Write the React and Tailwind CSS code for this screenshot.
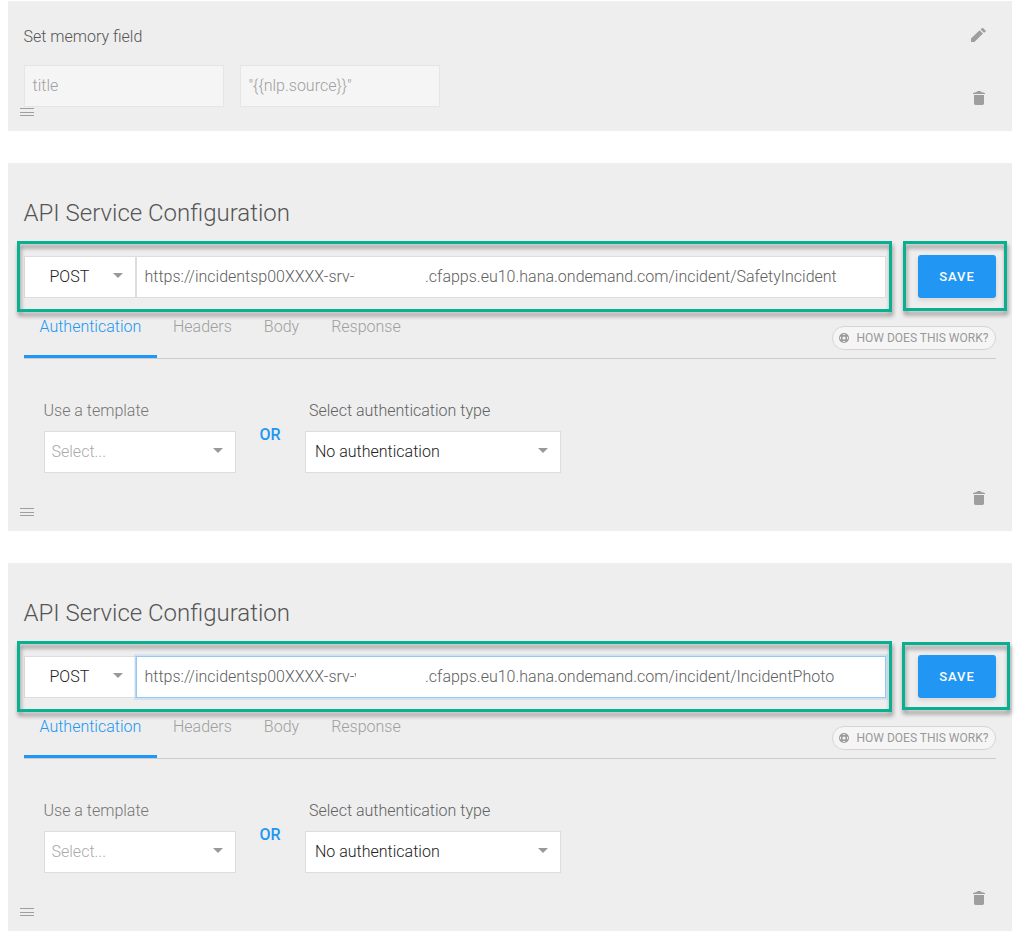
import React from "react";

function Caret({ className = "" }) {
  return (
    <svg className={`block h-[5px] w-[10px] shrink-0 ${className}`} viewBox="0 0 10 5" fill="#999">
      <path d="M0 0h10L5 5z" />
    </svg>
  );
}

function Trash() {
  return (
    <svg className="block h-[14px] w-3" viewBox="0 0 12 14" fill="#9e9e9e">
      <path d="M3.600 1L4.600 0h2.800l1 1L12 2v1H0V2zM1 4h10v8.600c0 .8-.6 1.400-1.400 1.400H2.400C1.600 14 1 13.400 1 12.600z" />
    </svg>
  );
}

function Pencil() {
  return (
    <svg className="block h-[14px] w-[15px]" viewBox="0 0 15 14" fill="#9e9e9e">
      <path d="M0 10.600L8.600 2.300l3.400 3.300L3.400 14H0zM9.600 1.400L10.800.3c.4-.4 1-.4 1.400 0l2.300 2.200c.4.4.4.9 0 1.300L13 4.700z" />
    </svg>
  );
}

function Handle() {
  return (
    <svg className="block h-2 w-[14px]" viewBox="0 0 14 8" fill="#9e9e9e">
      <path d="M0 0h14v1H0zM0 4h14v1H0zM0 7h14v1H0z" />
    </svg>
  );
}

function Lifebuoy() {
  return (
    <svg className="block h-[10px] w-[10px]" viewBox="0 0 10 10">
      <circle cx="5" cy="5" r="5" fill="#999" />
      <circle cx="5" cy="5" r="1.600" fill="#f5f5f5" />
      <path
        d="M3.700 1.700Q5 1.200 6.300 1.700M3.700 8.300Q5 8.800 6.300 8.300M1.700 3.700Q1.200 5 1.700 6.300M8.300 3.700Q8.800 5 8.300 6.300"
        fill="none"
        stroke="#f5f5f5"
        strokeWidth="0.900"
      />
    </svg>
  );
}

function MemoryCard() {
  return (
    <section className="flex h-[130px] justify-between bg-[#eee] pl-4 pr-[26px]">
      <div>
        <h2 className="-ml-[0.5px] mt-6 text-base leading-6 text-[#555]">Set memory field</h2>
        <div className="mt-4 flex gap-4">
          <div className="h-[42px] w-[200px] border border-[#e5e5e5] bg-[#f5f5f5] px-[7.5px] leading-[40px] text-[#a0a0a0]">title</div>
          <div className="h-[42px] w-[200px] border border-[#e5e5e5] bg-[#f5f5f5] px-[7.5px] leading-[40px] text-[#a0a0a0]">{'"{{nlp.source}}"'}</div>
        </div>
        <div className="-ml-1 mt-px"><Handle /></div>
      </div>
      <div className="flex flex-col items-center pt-[27px]">
        <Pencil />
        <div className="mt-[49px]"><Trash /></div>
      </div>
    </section>
  );
}

const tabs = ["Headers", "Body", "Response"];

function ServiceCard({ url, clip, focused, saveFrame }) {
  return (
    <section className="relative h-[368px] bg-[#eee] px-4">
      <h1 className="-ml-[0.5px] pt-[34px] text-2xl leading-8 text-[#555]">API Service Configuration</h1>
      <div className="mt-[26px] flex h-[43px] items-start">
        <div className="mt-[1px] flex h-[42px] w-[112px] items-center border border-[#ddd] bg-white pl-[24.5px] text-[#212121]">
          <span className="w-[63.5px] leading-[38px]">POST</span>
          <Caret className="-mt-[3px]" />
        </div>
        <div
          className={`mt-[1px] flex h-[42px] w-[750px] border bg-white pl-[7.5px] leading-[39px] text-[#606060] ${
            focused ? "border-[#90caf9] shadow-[0_0_0_2px_rgba(33,150,243,0.13)]" : "border-[#ddd]"
          }`}
        >
          <div className="w-[280.500px] shrink-0">
            <div className={`overflow-hidden whitespace-nowrap ${clip}`}>https://incidentsp00XXXX-srv-v</div>
          </div>
          <span className="whitespace-nowrap">{url}</span>
        </div>
        <button className="ml-auto h-[43px] w-[78px] rounded-[3px] bg-[#2196f3] text-[13px] font-medium tracking-[0.9px] text-white shadow-[0_2px_5px_rgba(0,0,0,0.12)]">
          SAVE
        </button>
      </div>

      <div className="flex h-[61px] items-start justify-between border-b border-[#ccc]">
        <nav className="flex h-[60px] text-[#9e9e9e]">
          <span className="w-[133px] border-b-[3px] border-[#2196f3] pt-[17px] pl-[15.5px] leading-6 text-[#2196f3]">Authentication</span>
          {tabs.map((t) => (
            <span key={t} className="pt-[17px] pr-4 pl-4 leading-6">{t}</span>
          ))}
        </nav>
        <div className="mt-7 flex h-6 w-[164px] items-center gap-[7.5px] rounded-full border border-[#d5d5d5] bg-[#f5f5f5] pl-1.5 text-xs font-normal whitespace-nowrap text-[#999]">
          <Lifebuoy />
          HOW DOES THIS WORK?
        </div>
      </div>

      <div className="mt-10 flex pl-5">
        <div className="w-[192px]">
          <div className="-ml-[0.5px] leading-6 text-[#757575]">Use a template</div>
          <div className="mt-2 flex h-[42px] items-center justify-between border border-[#ddd] bg-white pr-3 pl-[6.5px] text-[#aaa]">
            <span>Select...</span>
            <Caret className="-mt-[3px]" />
          </div>
        </div>
        <div className="w-[69px] pr-px pt-6 text-center font-medium leading-6 text-[#2196f3]">OR</div>
        <div className="w-[256px]">
          <div className="pl-1 leading-6 text-[#616161]">Select authentication type</div>
          <div className="mt-2 flex h-[42px] items-center justify-between border border-[#ddd] bg-white pr-3 pl-[9px] text-[#212121]">
            <span>No authentication</span>
            <Caret className="-mt-[3px]" />
          </div>
        </div>
      </div>

      <div className="-ml-1 mt-[18px] flex items-start justify-between pr-[11px]">
        <div className="mt-[17px]"><Handle /></div>
        <Trash />
      </div>

      <div className="pointer-events-none absolute top-[78px] left-[9px] h-[71px] w-[875px] border-[3px] border-[#09af91] drop-shadow-[1px_4px_2px_rgba(0,0,0,0.4)]" />
      <div className={`pointer-events-none absolute border-[3px] border-[#09af91] drop-shadow-[1px_4px_2px_rgba(0,0,0,0.4)] ${saveFrame}`} />
    </section>
  );
}

export default function App() {
  return (
    <main className="flex h-[937px] w-[1015px] flex-col gap-8 overflow-hidden bg-white pt-px pr-[3px] pl-2 font-['Roboto',sans-serif] text-base font-light">
      <MemoryCard />
      <ServiceCard
        url=".cfapps.eu10.hana.ondemand.com/incident/SafetyIncident"
        clip="w-[210px]"
        saveFrame="top-[78px] left-[895px] h-[70px] w-[104px]"
      />
      <ServiceCard
        url=".cfapps.eu10.hana.ondemand.com/incident/IncidentPhoto"
        clip="w-[211px]"
        focused
        saveFrame="top-[79px] left-[894px] h-[68px] w-[108px]"
      />
    </main>
  );
}
